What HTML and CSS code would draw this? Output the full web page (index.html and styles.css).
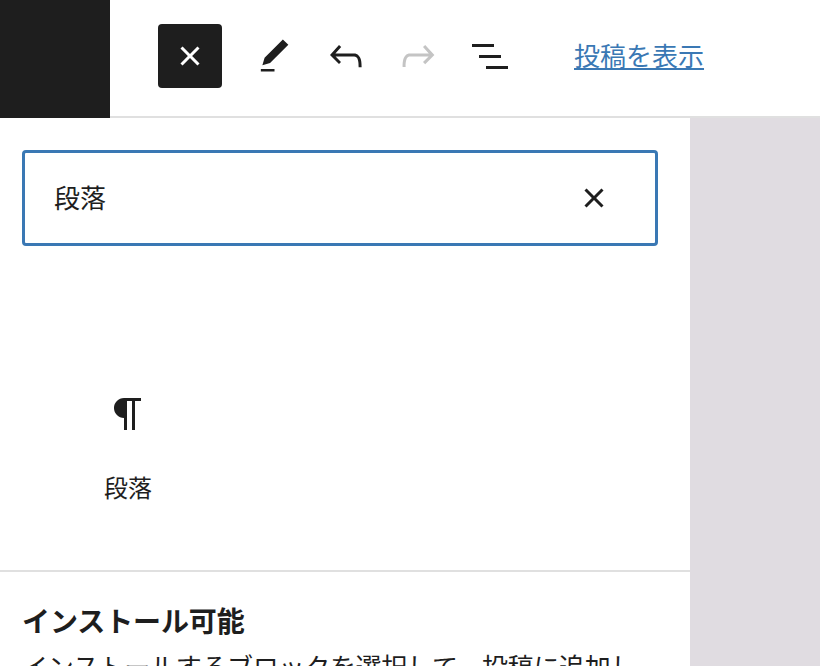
FILE: index.html
```html
<!DOCTYPE html>
<html lang="ja">
<head>
  <meta charset="UTF-8">
  <meta name="viewport" content="width=device-width, initial-scale=1.0">
  <title>投稿を編集</title>
  <link rel="stylesheet" href="styles.css">
</head>
<body>
  <div class="topbar">
    <div class="logo"></div>
    <div class="tools">
      <button class="tool close-btn" aria-label="閉じる">
        <svg viewBox="0 0 24 24" width="48" height="48"><path d="M12 13.06l3.712 3.713 1.061-1.06L13.061 12l3.712-3.712-1.06-1.06L12 10.938 8.288 7.227l-1.061 1.06L10.939 12l-3.712 3.712 1.06 1.061L12 13.061z"/></svg>
      </button>
      <button class="tool edit-btn" aria-label="ツール">
        <svg viewBox="0 0 24 24" width="41" height="41"><path d="M20.1 5.1L16.9 2 6.2 12.7l-1.3 4.4 4.5-1.3L20.1 5.1zM4 20.8h8v-1.5H4v1.5z"/></svg>
      </button>
      <button class="tool" aria-label="元に戻す">
        <svg viewBox="0 0 24 24" width="48" height="48"><path d="M18.3 11.7c-.6-.6-1.4-.9-2.3-.9H6.7l2.9-3.3-1.1-1-4.5 5L8.5 16l1-1-2.7-2.7H16c.5 0 .9.2 1.3.5 1 1 1 3.4 1 4.5v.3h1.5v-.2c0-1.5 0-4.3-1.5-5.7z"/></svg>
      </button>
      <button class="tool disabled" aria-label="やり直す">
        <svg viewBox="0 0 24 24" width="48" height="48"><path d="M15.6 6.5l-1.1 1 2.9 3.3H8c-.9 0-1.7.3-2.3.9-1.4 1.5-1.4 4.2-1.4 5.6v.2h1.5v-.3c0-1.1 0-3.5 1-4.5.3-.3.7-.5 1.3-.5h9.2L14.5 15l1.1 1.1 4.6-4.6-4.6-5z"/></svg>
      </button>
      <button class="tool" aria-label="リスト表示">
        <svg viewBox="0 0 24 24" width="48" height="48"><path d="M3 6h11v1.5H3V6Zm3.5 5.5h11V13h-11v-1.5ZM21 17H10v1.5h11V17Z"/></svg>
      </button>
      <a class="view-link" href="#">投稿を表示</a>
    </div>
  </div>

  <div class="content">
    <div class="inserter">
      <div class="search">
        <span class="search-text">段落</span>
        <svg viewBox="0 0 24 24" width="48" height="48"><path d="M12 13.06l3.712 3.713 1.061-1.06L13.061 12l3.712-3.712-1.06-1.06L12 10.938 8.288 7.227l-1.061 1.06L10.939 12l-3.712 3.712 1.06 1.061L12 13.061z"/></svg>
      </div>
      <div class="blocks">
        <div class="block-item">
          <svg viewBox="0 0 24 24" width="48" height="48"><path d="m9.99609 14v-.2251l.00391.0001v6.225h1.5v-14.5h2.5v14.5h1.5v-14.5h3v-1.5h-8.50391c-2.76142 0-5 2.23858-5 5 0 2.7614 2.23858 5 5 5z"/></svg>
          <span>段落</span>
        </div>
      </div>
      <div class="installable">
        <h2>インストール可能</h2>
        <p>インストールするブロックを選択して、投稿に追加し</p>
      </div>
    </div>
    <div class="canvas"></div>
  </div>
</body>
</html>
```

FILE: styles.css
```css
* { box-sizing: border-box; }
html, body { height: 100%; }
body { margin: 0; display: flex; flex-direction: column; overflow: hidden; background: #fff; color: #1e1e1e; font-family: "Noto Sans CJK JP", "Noto Sans", sans-serif; }
svg { display: block; fill: currentColor; }

.topbar { height: 118px; flex: none; display: flex; }
.logo { width: 110px; background: #1e1e1e; }
.tools { flex: 1; display: flex; align-items: center; padding: 0 0 4px 48px; border-bottom: 2px solid #e0e0e0; }
.tool { width: 64px; height: 64px; margin-right: 8px; padding: 0; border: none; border-radius: 4px; background: transparent; color: #1e1e1e; display: flex; align-items: center; justify-content: center; }
.close-btn { background: #1e1e1e; color: #fff; margin-right: 20px; }
.edit-btn svg { margin-top: 1px; }
.tool.disabled { color: #c4c4c4; }
.view-link { margin: -4px 0 0 44px; font-size: 26px; color: #3a78b4; text-decoration: underline; }

.content { flex: 1; display: flex; min-height: 0; }
.inserter { width: 690px; flex: none; padding-top: 32px; }
.canvas { flex: 1; background: #e0dce1; }

.search { height: 96px; margin: 0 32px 0 22px; padding: 0 40px 0 29px; border: 3px solid #3a78b4; border-radius: 4px; display: flex; align-items: center; justify-content: space-between; font-size: 26px; }
.search-text { margin-top: -4px; }
.search svg { margin-right: -3px; }

.blocks { height: 324px; padding: 144px 0 0 24px; }
.block-item { width: 208px; display: flex; flex-direction: column; align-items: center; gap: 31px; font-size: 24px; }

.installable { border-top: 2px solid #e0e0e0; padding: 28px 22px 0; }
.installable h2 { margin: 0; font-size: 28px; line-height: 40px; font-weight: 700; letter-spacing: -0.1px; }
.installable p { margin: 0; font-size: 26px; line-height: 52px; white-space: nowrap; letter-spacing: -0.3px; }
```
